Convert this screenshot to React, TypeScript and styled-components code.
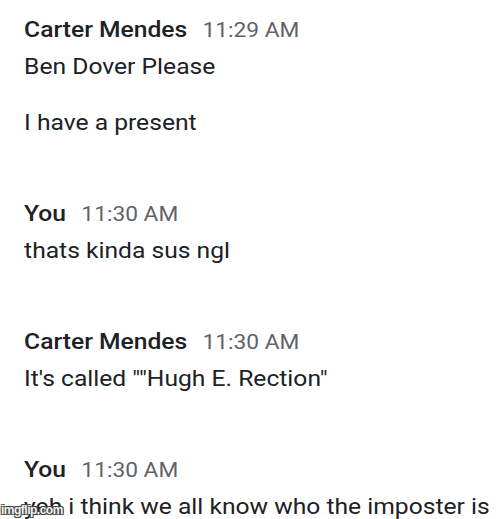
import React from 'react';
import styled, { createGlobalStyle } from 'styled-components';

const GlobalStyle = createGlobalStyle`
  body {
    margin: 0;
    background: #ffffff;
    font-family: Roboto, 'Noto Sans', sans-serif;
  }
`;

const Page = styled.div`
  position: relative;
  width: 500px;
  height: 519px;
  overflow: hidden;
  background: #ffffff;
`;

// the screenshot is a little stretched sideways, so the whole chat is too
const Chat = styled.div`
  display: flex;
  flex-direction: column;
  gap: 55px;
  padding: 11px 0 0 22px;
  transform: scaleX(1.095);
  transform-origin: 0 0;
`;

const Group = styled.div`
  display: flex;
  flex-direction: column;
`;

const Header = styled.div`
  display: flex;
  align-items: baseline;
  gap: 14px;
  line-height: 36px;
`;

const Name = styled.span`
  font-size: 22.5px;
  font-weight: 500;
  color: #202124;
`;

const Time = styled.span`
  font-size: 20.75px;
  color: #5f6368;
`;

const Messages = styled.div`
  display: flex;
  flex-direction: column;
  gap: 20px;
`;

const Text = styled.p`
  margin: 0;
  font-size: 22.5px;
  line-height: 36px;
  color: #202124;
  white-space: nowrap;
`;

const Watermark = styled.span`
  position: absolute;
  left: 1px;
  bottom: 2px;
  font-family: 'Liberation Sans', Arial, sans-serif;
  font-size: 12px;
  font-weight: 700;
  letter-spacing: -0.5px;
  color: #f4f4f4;
  text-shadow: -1px -1px 0 #444, 1px -1px 0 #444, -1px 1px 0 #444, 1px 1px 0 #444;
`;

type Msg = { name: string; time: string; lines: string[] };

const messages: Msg[] = [
  { name: 'Carter Mendes', time: '11:29 AM', lines: ['Ben Dover Please', 'I have a present'] },
  { name: 'You', time: '11:30 AM', lines: ['thats kinda sus ngl'] },
  { name: 'Carter Mendes', time: '11:30 AM', lines: ['It\'s called ""Hugh E. Rection"'] },
  { name: 'You', time: '11:30 AM', lines: ['yeh i think we all know who the imposter is'] },
];

const App = () => {
  return (
    <Page>
      <GlobalStyle />
      <Chat>
        {messages.map((m, i) => (
          <Group key={i}>
            <Header>
              <Name>{m.name}</Name>
              <Time>{m.time}</Time>
            </Header>
            <Messages>
              {m.lines.map((l, j) => (
                <Text key={j}>{l}</Text>
              ))}
            </Messages>
          </Group>
        ))}
      </Chat>
      <Watermark>imgflip.com</Watermark>
    </Page>
  );
};

export default App;
